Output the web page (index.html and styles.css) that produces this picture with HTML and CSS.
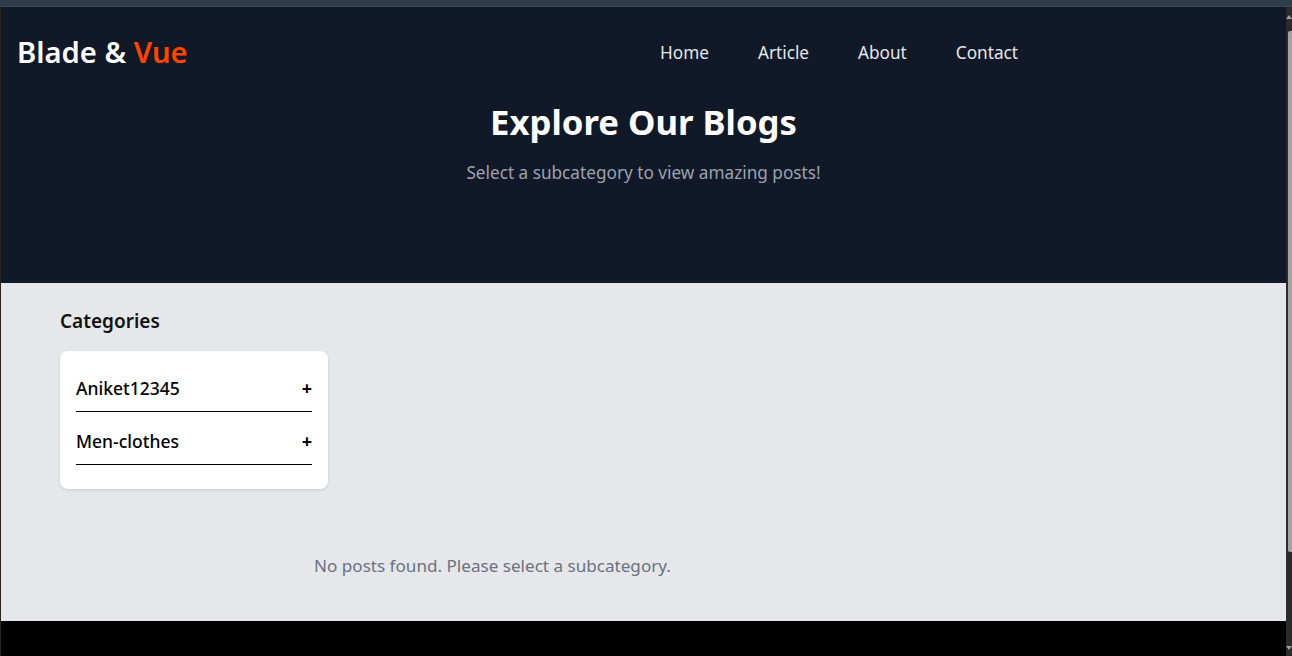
FILE: index.html
```html
<!DOCTYPE html>
<html lang="en">
<head>
<meta charset="utf-8">
<title>Blade &amp; Vue</title>
<link rel="stylesheet" href="styles.css">
</head>
<body>
<div class="window">
  <div class="topbar"></div>
  <div class="frame">
    <div class="left-edge"></div>
    <div class="page">
      <header class="hero">
        <nav class="nav">
          <a class="logo" href="#">Blade &amp; <span class="logo-accent">Vue</span></a>
          <ul class="nav-links">
            <li><a href="#">Home</a></li>
            <li><a href="#">Article</a></li>
            <li><a href="#">About</a></li>
            <li><a href="#">Contact</a></li>
          </ul>
        </nav>
        <h1 class="hero-title">Explore Our Blogs</h1>
        <p class="hero-sub">Select a subcategory to view amazing posts!</p>
      </header>
      <main class="content">
        <h2 class="cat-heading">Categories</h2>
        <div class="cat-card">
          <div class="cat-item"><span>Aniket12345</span><span class="plus">+</span></div>
          <div class="cat-item"><span>Men-clothes</span><span class="plus">+</span></div>
        </div>
        <p class="empty">No posts found. Please select a subcategory.</p>
      </main>
      <footer class="footer"></footer>
    </div>
    <div class="scrollbar">
      <div class="arrow-up"></div>
      <div class="thumb"></div>
      <div class="arrow-down"></div>
    </div>
  </div>
</div>
</body>
</html>
```
FILE: styles.css
```css
* { box-sizing: border-box; }
html, body { margin: 0; padding: 0; }
body {
  font-family: "Noto Sans", "DejaVu Sans", sans-serif;
  background: #000;
  overflow: hidden;
}
.window {
  width: 1292px;
  height: 656px;
  display: flex;
  flex-direction: column;
}
.topbar {
  height: 7px;
  background: #2f3d4a;
  border-bottom: 1px solid #3a4753;
}
.frame {
  flex: 1;
  display: flex;
  min-height: 0;
}
.left-edge {
  width: 1px;
  background: #2a2623;
}
.page {
  flex: 1;
  display: flex;
  flex-direction: column;
  background: #000;
  min-width: 0;
}
.hero {
  height: 276px;
  background: #111827;
  padding-bottom: 96px;
}
.nav {
  display: flex;
  align-items: center;
  justify-content: space-between;
  padding: 24px 268px 24px 16px;
  height: 90px;
}
.logo {
  color: #fff;
  text-decoration: none;
  font-size: 29.2px;
  font-weight: 600;
  line-height: 42px;
}
.logo-accent { color: #ff4500; }
.nav-links {
  display: flex;
  gap: 49px;
  list-style: none;
  margin: 2px 0 0;
  padding: 0;
}
.nav-links a {
  color: #e5e7eb;
  text-decoration: none;
  font-size: 17.2px;
  line-height: 28px;
}
.hero-title {
  margin: 5px 0 0;
  text-align: center;
  color: #fff;
  font-size: 34.7px;
  line-height: 40px;
  font-weight: 700;
}
.hero-sub {
  margin: 17px 0 0;
  text-align: center;
  color: #9ca3af;
  font-size: 17.2px;
  line-height: 28px;
}
.content {
  height: 338px;
  background: #e5e7eb;
  padding: 24px 59px 0;
}
.cat-heading {
  margin: 0;
  font-size: 19px;
  line-height: 28px;
  font-weight: 600;
  color: #111;
}
.cat-card {
  margin-top: 16px;
  width: 268px;
  background: #fff;
  border-radius: 8px;
  box-shadow: 0 1px 3px rgba(0,0,0,0.12);
  padding: 8px 16px 24px;
}
.cat-item {
  display: flex;
  justify-content: space-between;
  align-items: center;
  padding: 17px 0 11px;
  border-bottom: 1px solid #000;
  font-size: 17.5px;
  line-height: 24px;
  font-weight: 500;
  color: #000;
}
.plus { font-size: 18px; font-weight: 700; }
.empty {
  margin: 63px 0 0;
  padding-left: 254px;
  color: #6b7280;
  font-size: 17.1px;
  line-height: 28px;
}
.footer {
  flex: 1;
  background: #000;
}
.scrollbar {
  width: 6px;
  background: #2b2b2b;
  display: flex;
  flex-direction: column;
  align-items: flex-end;
  padding: 8px 0 6px;
}
.arrow-up {
  width: 0; height: 0;
  border-left: 3px solid transparent;
  border-right: 3px solid transparent;
  border-bottom: 4px solid #a0a0a0;
}
.thumb {
  margin-top: 12px;
  width: 4px;
  height: 521px;
  background: #a3a3a3;
  border-radius: 2px 0 0 2px;
}
.arrow-down {
  margin-top: auto;
  width: 0; height: 0;
  border-left: 3px solid transparent;
  border-right: 3px solid transparent;
  border-top: 4px solid #a0a0a0;
}
```
